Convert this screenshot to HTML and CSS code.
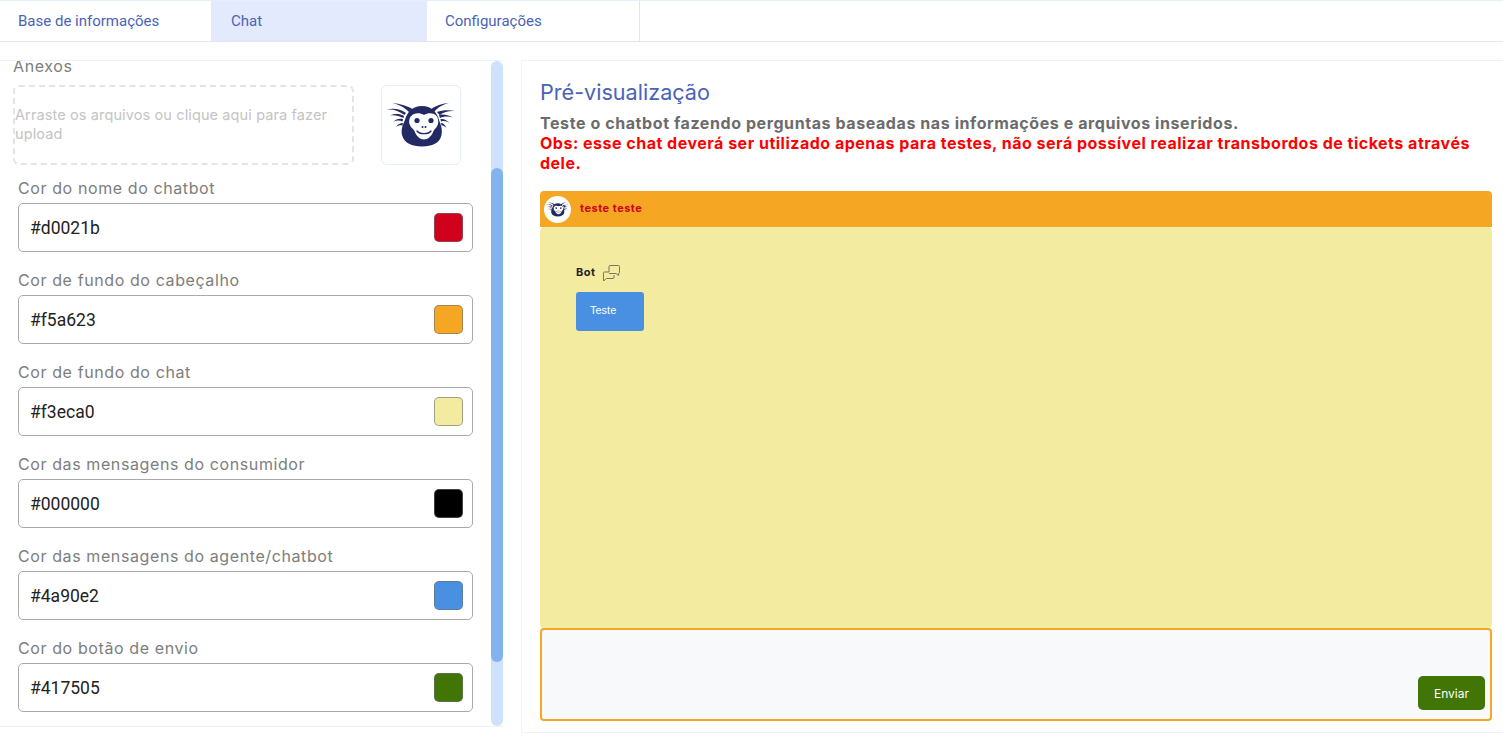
FILE: index.html
```html
<!DOCTYPE html>
<html lang="pt-BR">
<head>
    <meta charset="UTF-8">
    <meta name="viewport" content="width=device-width, initial-scale=1.0">
    <title>Chat</title>
    <link rel="stylesheet" href="styles.css">
</head>
<body>
    <svg class="sprite" width="0" height="0">
        <symbol id="monkey" viewBox="0 0 70 46">
            <g fill="#232a63">
                <path d="M28 8C22 4 14 1.500 6 1C13 2.500 18 5 23 10Z"/>
                <path d="M20 11C14 7 8 6 1 7.500C8 7 13 9 18.500 13Z"/>
                <path d="M18 14C13 11.500 9 11.500 4 13.500C9 12.500 13 14 17.500 16Z"/>
                <path d="M17 17C13 16 10 17 7 20C10.500 18 13.500 18 16.500 19.500Z"/>
                <path d="M17 21C14 21 12 22 10 25C12.500 23 14.500 23 16.500 23.500Z"/>
                <path d="M44 8C49 4 55 1.500 63 1C57 2.500 52 5 48 10Z"/>
                <path d="M51 10C56 8 63 7.500 69 9C63 8.500 58 10 53.500 13Z"/>
                <path d="M53 13C57 12 62 13 67 15.500C62 14 58 14 54 16Z"/>
                <path d="M54.500 17C58 16.500 61 18 64 21.500C61 19 58 18.500 55 19.500Z"/>
                <path d="M55 21C57.500 21 59 23 60.500 26C58.500 24 57 23.500 55.500 23.500Z"/>
            </g>
            <path fill="#232a63" d="M36 4C27 4 21 10 19 18C16 24 15 28 16 33C18 41 26 44.500 36 44.500C46 44.500 54 41 55.500 33C56.500 28 55.500 24 53 18C51 10 45 4 36 4Z"/>
            <path fill="#fff" d="M38 13C35 11 31 10.500 28 12C24 13.500 22.500 18 23.500 22C24.500 25.500 27 26.500 28.500 29C30.500 34.500 34 37.500 38 37.500C42 37.500 45.500 34.500 47.500 29C49 26.500 51 25.500 52 22C53 18 51.500 13.500 48 12C45 10.500 41 11 38 13Z"/>
            <circle cx="31" cy="18.500" r="2.600" fill="#232a63"/>
            <circle cx="45" cy="18.500" r="2.600" fill="#232a63"/>
            <circle cx="36.500" cy="25" r="1" fill="#232a63"/>
            <circle cx="39.500" cy="25" r="1" fill="#232a63"/>
            <path fill="none" stroke="#232a63" stroke-width="1.300" stroke-linecap="round" d="M31 29C33.500 32.500 42.500 32.500 45 29"/>
        </symbol>
    </svg>

    <nav class="tabs">
        <a class="tab">Base de informações</a>
        <a class="tab active">Chat</a>
        <a class="tab last">Configurações</a>
    </nav>

    <main class="content">
        <section class="settings">
            <div class="settings-scroll">
                <div class="section-label">Anexos</div>
                <div class="upload-row">
                    <div class="dropzone">Arraste os arquivos ou clique aqui para fazer upload</div>
                    <div class="logo-box">
                        <svg class="logo-img"><use href="#monkey"/></svg>
                    </div>
                </div>

                <div class="field">
                    <label>Cor do nome do chatbot</label>
                    <div class="color-input">
                        <span>#d0021b</span>
                        <i class="swatch" style="background: #d0021b"></i>
                    </div>
                </div>
                <div class="field">
                    <label>Cor de fundo do cabeçalho</label>
                    <div class="color-input">
                        <span>#f5a623</span>
                        <i class="swatch" style="background: #f5a623"></i>
                    </div>
                </div>
                <div class="field">
                    <label>Cor de fundo do chat</label>
                    <div class="color-input">
                        <span>#f3eca0</span>
                        <i class="swatch" style="background: #f3eca0"></i>
                    </div>
                </div>
                <div class="field">
                    <label>Cor das mensagens do consumidor</label>
                    <div class="color-input">
                        <span>#000000</span>
                        <i class="swatch" style="background: #000000"></i>
                    </div>
                </div>
                <div class="field">
                    <label>Cor das mensagens do agente/chatbot</label>
                    <div class="color-input">
                        <span>#4a90e2</span>
                        <i class="swatch" style="background: #4a90e2"></i>
                    </div>
                </div>
                <div class="field">
                    <label>Cor do botão de envio</label>
                    <div class="color-input">
                        <span>#417505</span>
                        <i class="swatch" style="background: #417505"></i>
                    </div>
                </div>
            </div>
            <div class="scrollbar">
                <div class="scrollbar-thumb"></div>
            </div>
        </section>

        <section class="preview">
            <h2>Pré-visualização</h2>
            <p class="preview-text">Teste o chatbot fazendo perguntas baseadas nas informações e arquivos inseridos.</p>
            <p class="preview-warning">Obs: esse chat deverá ser utilizado apenas para testes, não será possível realizar transbordos de tickets através dele.</p>

            <div class="chat-header">
                <div class="avatar">
                    <svg class="avatar-img"><use href="#monkey"/></svg>
                </div>
                <span class="chat-name">teste teste</span>
            </div>
            <div class="chat-body">
                <div class="sender">
                    <span>Bot</span>
                    <svg class="sender-icon" viewBox="0 0 18 17" fill="none" stroke="#77775c" stroke-width="1">
                        <path d="M6 8V2.500Q6 1.500 7 1.500H15.500Q16.500 1.500 16.500 2.500V8.500Q16.500 9.500 15.500 9.500V11.500L13 9.500H6"/>
                        <path d="M6 8H1.500Q0.500 8 0.500 9V17L3.500 14.500H10Q11 14.500 11 13.500V11"/>
                    </svg>
                </div>
                <div class="bubble">Teste</div>
            </div>
            <div class="chat-input">
                <button class="send-button">Enviar</button>
            </div>
        </section>
    </main>
</body>
</html>
```

FILE: styles.css
```css
* {
    margin: 0;
    padding: 0;
    box-sizing: border-box;
}

body {
    font-family: 'Inter', 'Open Sans', sans-serif;
    background: #fff;
    height: 753px;
    overflow: hidden;
}

.sprite {
    display: block;
    height: 0;
}

.tabs {
    display: flex;
    height: 42px;
    border-top: 1px solid #e6edfd;
    border-bottom: 1px solid #e2e6ee;
}

.tab {
    font-family: 'Roboto', sans-serif;
    font-size: 15px;
    line-height: 41px;
    color: #4a63b8;
    padding-left: 18px;
    width: 211px;
}

.tab.active {
    background: #e4eafd;
    padding-left: 20px;
    width: 216px;
}

.tab.last {
    width: 213px;
    border-right: 1px solid #e2e6ee;
}

.content {
    display: flex;
    align-items: flex-start;
    margin-top: 18px;
    gap: 18px;
}

.settings {
    display: flex;
    width: 503px;
    height: 667px;
    border-top: 1px solid #eef2fd;
    border-bottom: 1px solid #eef2fd;
    overflow: hidden;
}

.settings-scroll {
    width: 491px;
    height: 665px;
    overflow: hidden;
    padding: 0 18px 0 13px;
}

.section-label {
    font-size: 16px;
    letter-spacing: 0.6px;
    line-height: 12px;
    color: #7d7d7d;
    margin-top: -1px;
    margin-bottom: 13px;
}

.upload-row {
    display: flex;
    gap: 27px;
}

.dropzone {
    width: 341px;
    height: 80px;
    flex-shrink: 0;
    border: 2px dashed #e4e4e4;
    border-radius: 6px;
    display: flex;
    align-items: center;
    padding-bottom: 2px;
    font-size: 14.5px;
    letter-spacing: 0.12px;
    line-height: 19px;
    color: #c4c4c4;
}

.logo-box {
    width: 80px;
    height: 80px;
    flex-shrink: 0;
    border: 1px solid #e6edfd;
    border-radius: 6px;
    display: flex;
    align-items: center;
    justify-content: center;
}

.logo-img {
    width: 70px;
    height: 46px;
}

.field {
    margin-left: 5px;
    height: 92px;
}

.upload-row + .field {
    margin-top: 14px;
}

.field label {
    display: block;
    font-size: 16px;
    letter-spacing: 0.6px;
    line-height: 18px;
    color: #7d7d7d;
    margin-bottom: 6px;
}

.color-input {
    display: flex;
    align-items: center;
    justify-content: space-between;
    width: 455px;
    height: 49px;
    border: 1px solid #aaa;
    border-radius: 5px;
    padding: 0 9px 0 11px;
    font-family: 'Roboto', sans-serif;
    font-size: 17.5px;
    color: #222;
}

.swatch {
    display: block;
    width: 29px;
    height: 29px;
    border: 1px solid rgba(110, 110, 110, 0.6);
    border-radius: 5px;
}

.scrollbar {
    width: 12px;
    height: 665px;
    background: #cfe1fc;
    border-radius: 6px;
}

.scrollbar-thumb {
    width: 12px;
    height: 494px;
    margin-top: 107px;
    background: #83b3ef;
    border-radius: 6px;
}

.preview {
    width: 982px;
    height: 673px;
    border: 1px solid #eef2fd;
    border-right: 0;
    padding: 0 11px 0 18px;
}

.preview h2 {
    font-size: 21.6px;
    font-weight: 400;
    line-height: 28px;
    color: #4a63b8;
    margin-top: 17px;
    margin-bottom: 7px;
}

.preview-text,
.preview-warning {
    font-size: 16px;
    font-weight: 700;
    line-height: 20px;
}

.preview-text {
    letter-spacing: 0.58px;
    color: #6b6b6b;
}

.preview-warning {
    letter-spacing: 0.5px;
    color: #f00;
}

.chat-header {
    display: flex;
    align-items: center;
    gap: 9px;
    height: 36px;
    margin-top: 18px;
    padding-left: 4px;
    background: #f5a623;
    border-radius: 4px 4px 0 0;
}

.avatar {
    width: 27px;
    height: 27px;
    background: #fff;
    border-radius: 50%;
    display: flex;
    align-items: center;
    justify-content: center;
}

.avatar-img {
    width: 23px;
    height: 15px;
}

.chat-name {
    padding-bottom: 2px;
    font-size: 11px;
    font-weight: 700;
    letter-spacing: 0.5px;
    color: #d0021b;
}

.chat-body {
    height: 401px;
    padding: 36px 36px 0;
    background: #f3eca0;
    border-radius: 4px;
}

.sender {
    display: flex;
    align-items: center;
    gap: 7px;
    height: 18px;
    font-size: 11px;
    font-weight: 700;
    letter-spacing: 0.5px;
    color: #222;
}

.sender-icon {
    width: 18px;
    height: 17px;
}

.bubble {
    width: 68px;
    height: 39px;
    margin-top: 11px;
    padding: 11px 14px;
    background: #4a90e2;
    border-radius: 3px;
    font-family: 'Liberation Sans', sans-serif;
    font-size: 11px;
    line-height: 14px;
    color: #fff;
}

.chat-input {
    display: flex;
    align-items: flex-end;
    justify-content: flex-end;
    height: 93px;
    padding: 0 5px 9px 0;
    background: #f8f9fa;
    border: 2px solid #f5a623;
    border-radius: 4px;
}

.send-button {
    width: 67px;
    height: 34px;
    background: #417505;
    border: none;
    border-radius: 5px;
    font-family: inherit;
    font-size: 12px;
    color: #fff;
}
```
